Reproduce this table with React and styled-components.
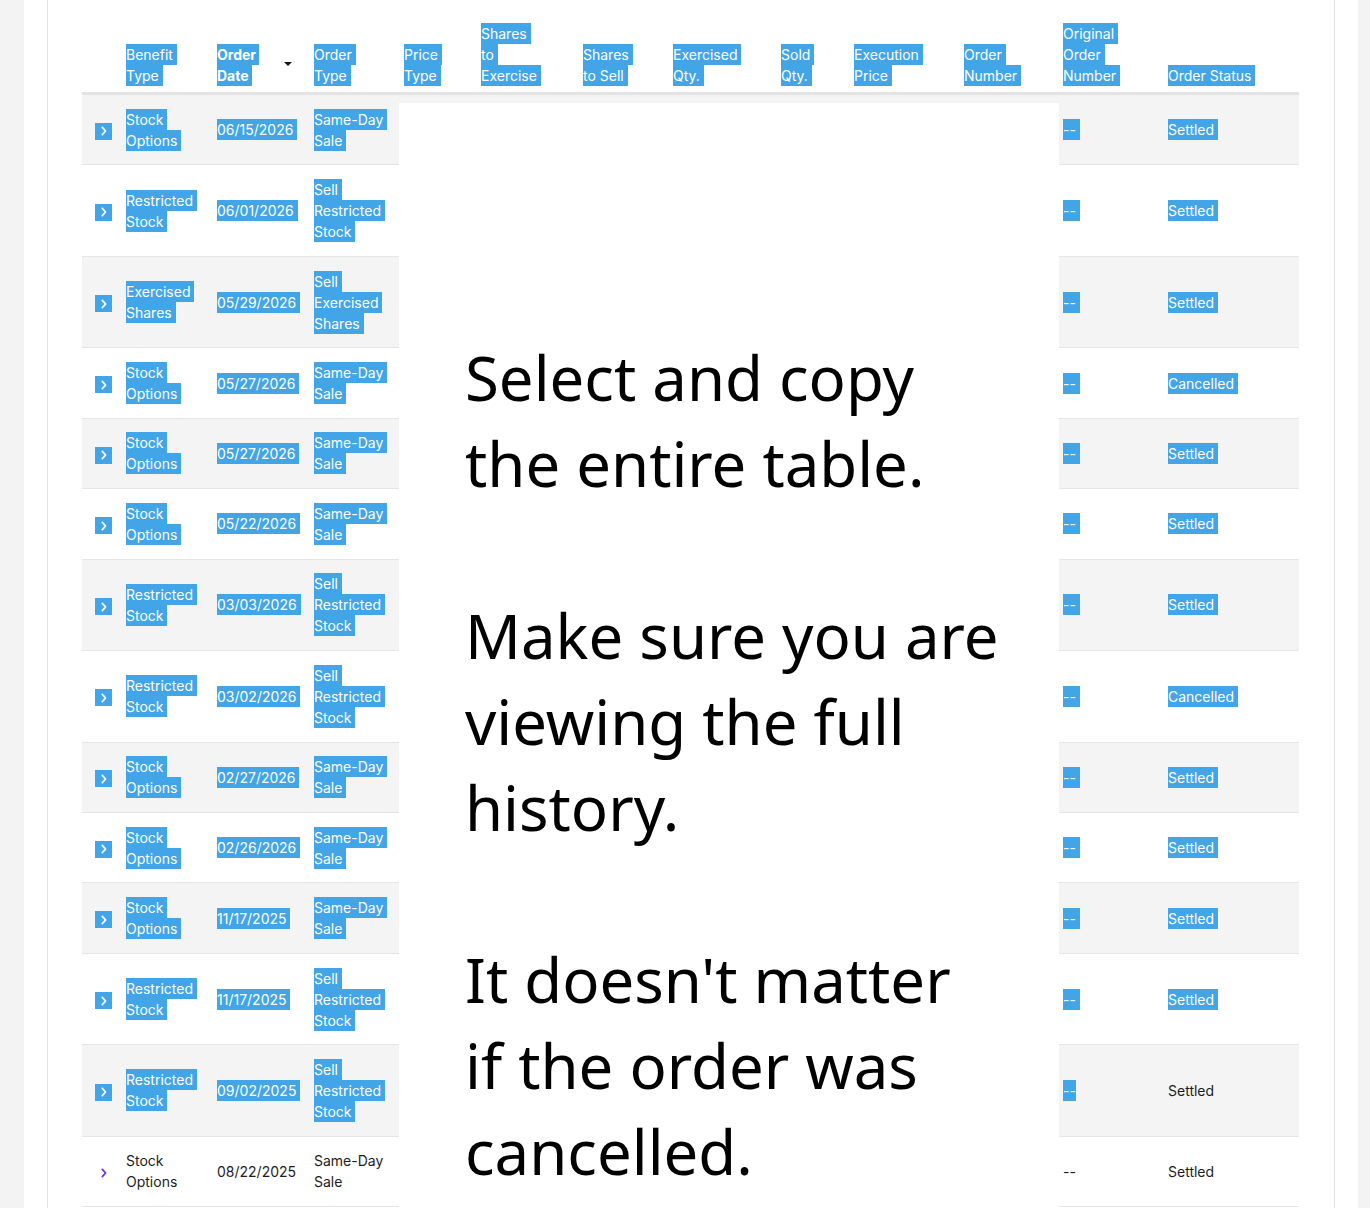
import React, { useEffect, useRef } from "react";
import styled, { createGlobalStyle } from "styled-components";

const GlobalStyle = createGlobalStyle`
  html, body {
    margin: 0;
    padding: 0;
    background: #f3f3f3;
    overflow: hidden;
  }
  body {
    font-family: Inter, "Noto Sans", Arial, sans-serif;
  }
  ::selection {
    background: #42a5e8;
    color: #ffffff;
  }
`;

const Page = styled.div`
  margin-left: 24px;
  width: 1334px;
  height: 1208px;
  padding: 0 23px;
  box-sizing: border-box;
  background: #ffffff;
`;

const Card = styled.section`
  height: 100%;
  box-sizing: border-box;
  padding: 23px 35px 0 34px;
  border-left: 1px solid #e1e1e1;
  border-right: 1px solid #e1e1e1;
`;

const TableArea = styled.div`
  position: relative;
`;

const Table = styled.table`
  width: 1217px;
  table-layout: fixed;
  border-collapse: separate;
  border-spacing: 0;
  font-size: 14px;
  line-height: 21px;
  color: #1d1d1d;
`;

const Th = styled.th`
  vertical-align: bottom;
  text-align: left;
  font-weight: 400;
  padding: 0 0 6px 0;
  border-bottom: 3px solid #e3e3e3;
`;

const HeadFlex = styled.div`
  display: flex;
  align-items: center;
  justify-content: space-between;
  padding-right: ${(p) => (p.$sorted ? "22px" : "0")};
`;

const HeadLabel = styled.div`
  max-width: ${(p) => p.$max}px;
  font-weight: ${(p) => (p.$bold ? 700 : 400)};
`;

const SortArrow = styled.span`
  width: 0;
  height: 0;
  margin-bottom: 3px;
  border-left: 4px solid transparent;
  border-right: 4px solid transparent;
  border-top: 4px solid #141414;
  user-select: none;
`;

const Row = styled.tr`
  background: ${(p) => (p.$striped ? "#f4f4f4" : "#ffffff")};
`;

const Td = styled.td`
  vertical-align: middle;
  padding: 13.72px 8px 13.72px ${(p) => (p.$first ? "13px" : "0")};
  border-bottom: 1px solid #e6e6e6;
`;

const ExpandBox = styled.span`
  display: inline-flex;
  align-items: center;
  justify-content: center;
  width: 17px;
  height: 17px;
  vertical-align: middle;
  background: ${(p) => (p.$selected ? "#42a5e8" : "transparent")};
  color: ${(p) => (p.$selected ? "#ffffff" : "#6b32e3")};
  user-select: none;
`;

const Overlay = styled.div`
  position: absolute;
  left: 317px;
  top: 80px;
  width: 660px;
  height: 1200px;
  box-sizing: border-box;
  padding: 231px 0 0 66px;
  background: #ffffff;
  font-family: "Noto Sans", "Open Sans", sans-serif;
  font-size: 61.7px;
  line-height: 86px;
  color: #000000;
`;

const Message = styled.p`
  margin: 0 0 86px 0;
`;

const columns = [
  { key: "expand", width: 44, label: "", max: 0 },
  { key: "benefit", width: 91, label: "Benefit Type", max: 72 },
  { key: "date", width: 97, label: "Order Date", max: 60, sorted: true },
  { key: "orderType", width: 90, label: "Order Type", max: 60 },
  { key: "priceType", width: 77, label: "Price Type", max: 60 },
  { key: "sharesEx", width: 102, label: "Shares to Exercise", max: 60 },
  { key: "sharesSell", width: 90, label: "Shares to Sell", max: 60 },
  { key: "exQty", width: 108, label: "Exercised Qty.", max: 80 },
  { key: "soldQty", width: 73, label: "Sold Qty.", max: 50 },
  { key: "execPrice", width: 110, label: "Execution Price", max: 80 },
  { key: "orderNum", width: 99, label: "Order Number", max: 70 },
  { key: "origNum", width: 105, label: "Original Order Number", max: 70 },
  { key: "status", width: 131, label: "Order Status", max: 131 },
];

const rows = [
  ["Stock Options", "06/15/2026", "Same-Day Sale", "Settled"],
  ["Restricted Stock", "06/01/2026", "Sell Restricted Stock", "Settled"],
  ["Exercised Shares", "05/29/2026", "Sell Exercised Shares", "Settled"],
  ["Stock Options", "05/27/2026", "Same-Day Sale", "Cancelled"],
  ["Stock Options", "05/27/2026", "Same-Day Sale", "Settled"],
  ["Stock Options", "05/22/2026", "Same-Day Sale", "Settled"],
  ["Restricted Stock", "03/03/2026", "Sell Restricted Stock", "Settled"],
  ["Restricted Stock", "03/02/2026", "Sell Restricted Stock", "Cancelled"],
  ["Stock Options", "02/27/2026", "Same-Day Sale", "Settled"],
  ["Stock Options", "02/26/2026", "Same-Day Sale", "Settled"],
  ["Stock Options", "11/17/2025", "Same-Day Sale", "Settled"],
  ["Restricted Stock", "11/17/2025", "Sell Restricted Stock", "Settled"],
  ["Restricted Stock", "09/02/2025", "Sell Restricted Stock", "Settled"],
  ["Stock Options", "08/22/2025", "Same-Day Sale", "Settled"],
];

const LAST_SELECTED = 12;

function Chevron() {
  return (
    <svg width="6" height="10" viewBox="0 0 6 10" aria-hidden="true">
      <path
        d="M1.3 1.4 L4.6 5 L1.3 8.6"
        fill="none"
        stroke="currentColor"
        strokeWidth="1.8"
        strokeLinecap="round"
        strokeLinejoin="round"
      />
    </svg>
  );
}

export default function App() {
  const tableRef = useRef(null);
  const endRef = useRef(null);

  useEffect(() => {
    const table = tableRef.current;
    const end = endRef.current;
    if (!table || !end) return;
    const range = document.createRange();
    range.setStart(table, 0);
    range.setEnd(end, end.childNodes.length);
    const sel = window.getSelection();
    sel.removeAllRanges();
    sel.addRange(range);
  }, []);

  return (
    <>
      <GlobalStyle />
      <Page>
        <Card>
          <TableArea>
            <Table ref={tableRef}>
              <colgroup>
                {columns.map((c) => (
                  <col key={c.key} style={{ width: c.width }} />
                ))}
              </colgroup>
              <thead>
                <tr>
                  {columns.map((c) => (
                    <Th key={c.key}>
                      {c.label && (
                        <HeadFlex $sorted={c.sorted}>
                          <HeadLabel $max={c.max} $bold={c.sorted}>
                            {c.label}
                          </HeadLabel>
                          {c.sorted && <SortArrow />}
                        </HeadFlex>
                      )}
                    </Th>
                  ))}
                </tr>
              </thead>
              <tbody>
                {rows.map((r, i) => (
                  <Row key={i} $striped={i % 2 === 0}>
                    <Td $first>
                      <ExpandBox $selected={i <= LAST_SELECTED}>
                        <Chevron />
                      </ExpandBox>
                    </Td>
                    <Td>{r[0]}</Td>
                    <Td>{r[1]}</Td>
                    <Td>{r[2]}</Td>
                    <Td />
                    <Td />
                    <Td />
                    <Td />
                    <Td />
                    <Td />
                    <Td />
                    <Td ref={i === LAST_SELECTED ? endRef : undefined}>--</Td>
                    <Td>{r[3]}</Td>
                  </Row>
                ))}
              </tbody>
            </Table>
            <Overlay>
              <Message>
                Select and copy
                <br />
                the entire table.
              </Message>
              <Message>
                Make sure you are
                <br />
                viewing the full
                <br />
                history.
              </Message>
              <Message>
                It doesn't matter
                <br />
                if the order was
                <br />
                cancelled.
              </Message>
            </Overlay>
          </TableArea>
        </Card>
      </Page>
    </>
  );
}
